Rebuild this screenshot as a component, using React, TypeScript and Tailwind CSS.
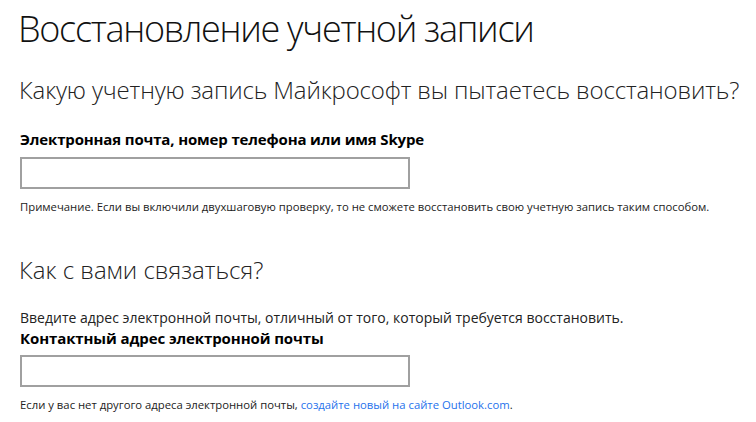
export default function App() {
  return (
    <div
      className="min-h-screen bg-white px-[20px] pt-[6px] text-black"
      style={{ fontFamily: '"Open Sans", "Noto Sans", sans-serif' }}
    >
      <h1 className="ml-[-2px] text-[36px] font-light leading-[46px] tracking-[-1.3px] text-[#111]">
        Восстановление учетной записи
      </h1>

      <h2 className="ml-[-1px] mt-[22px] whitespace-nowrap text-[24px] font-light leading-[32px] tracking-[-0.15px] text-[#222]">
        Какую учетную запись Майкрософт вы пытаетесь восстановить?
      </h2>

      <label className="mt-[23px] block text-[15px] font-bold leading-[20px] tracking-[-0.15px]">
        Электронная почта, номер телефона или имя Skype
      </label>
      <input
        type="text"
        className="mt-[8px] block h-[32px] w-[390px] border-2 border-[#a0a0a0] bg-white outline-none"
      />
      <p className="mt-[10px] text-[11.3px] leading-[16px] text-[#222]">
        Примечание. Если вы включили двухшаговую проверку, то не сможете восстановить свою учетную запись таким способом.
      </p>

      <h2 className="ml-[-1px] mt-[39px] text-[24px] font-light leading-[32px] text-[#222]">
        Как с вами связаться?
      </h2>

      <p className="mt-[22px] text-[14px] leading-[20px] text-[#222]">
        Введите адрес электронной почты, отличный от того, который требуется восстановить.
      </p>
      <label className="block text-[15px] font-bold leading-[20px] tracking-[-0.1px]">
        Контактный адрес электронной почты
      </label>
      <input
        type="text"
        className="mt-[7px] block h-[32px] w-[390px] border-2 border-[#a0a0a0] bg-white outline-none"
      />
      <p className="mt-[10px] text-[11.3px] leading-[16px] text-[#222]">
        Если у вас нет другого адреса электронной почты,{' '}
        <a href="#" className="text-[#2672ec]">
          создайте новый на сайте Outlook.com
        </a>
        .
      </p>
    </div>
  )
}
